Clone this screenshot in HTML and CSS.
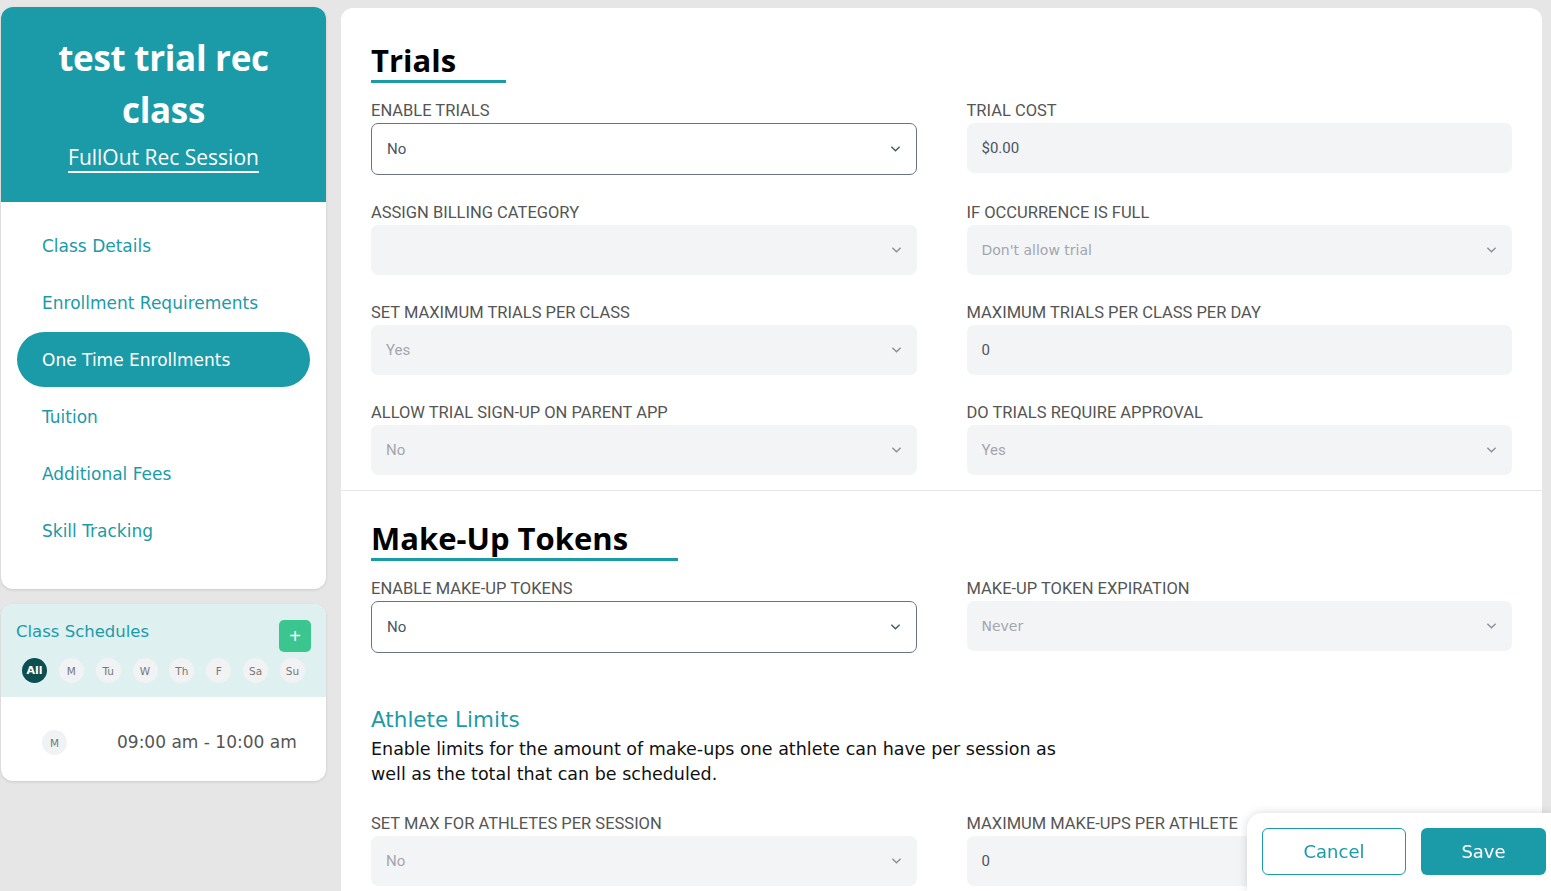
FILE: index.html
```html
<!DOCTYPE html>
<html>

<head>
    <title>test trial rec class</title>
    <link rel="stylesheet" href="styles.css">
</head>

<body>

    <div class="page">
        <aside class="sidebar">
            <div class="class-card">
                <div class="class-header">
                    <h1>test trial rec class</h1>
                    <a href="#" class="session-link">FullOut Rec Session</a>
                </div>
                <nav class="class-nav">
                    <a href="#" class="nav-item">Class Details</a>
                    <a href="#" class="nav-item">Enrollment Requirements</a>
                    <a href="#" class="nav-item active">One Time Enrollments</a>
                    <a href="#" class="nav-item">Tuition</a>
                    <a href="#" class="nav-item">Additional Fees</a>
                    <a href="#" class="nav-item">Skill Tracking</a>
                </nav>
            </div>

            <div class="schedule-card">
                <div class="schedule-header">
                    <div class="schedule-top">
                        <span class="schedule-title">Class Schedules</span>
                        <button class="add-btn">+</button>
                    </div>
                    <div class="day-chips">
                        <span class="chip chip-all">All</span>
                        <span class="chip">M</span>
                        <span class="chip">Tu</span>
                        <span class="chip">W</span>
                        <span class="chip">Th</span>
                        <span class="chip">F</span>
                        <span class="chip">Sa</span>
                        <span class="chip">Su</span>
                    </div>
                </div>
                <div class="schedule-row">
                    <span class="chip">M</span>
                    <span class="schedule-time">09:00 am - 10:00 am</span>
                </div>
            </div>
        </aside>

        <main class="main-card">
            <section class="settings-section trials">
                <h2 class="section-title">Trials</h2>
                <div class="field-grid">
                    <div class="field">
                        <label>Enable Trials</label>
                        <div class="select">
                            <span>No</span>
                            <svg class="chevron" viewBox="0 0 12 8"><path d="M1.5 1.5 6 6l4.5-4.5" /></svg>
                        </div>
                    </div>
                    <div class="field">
                        <label>Trial Cost</label>
                        <div class="input readonly">$0.00</div>
                    </div>
                    <div class="field">
                        <label>Assign Billing Category</label>
                        <div class="select disabled">
                            <span></span>
                            <svg class="chevron" viewBox="0 0 12 8"><path d="M1.5 1.5 6 6l4.5-4.5" /></svg>
                        </div>
                    </div>
                    <div class="field">
                        <label>If Occurrence Is Full</label>
                        <div class="select disabled">
                            <span class="option-text">Don't allow trial</span>
                            <svg class="chevron" viewBox="0 0 12 8"><path d="M1.5 1.5 6 6l4.5-4.5" /></svg>
                        </div>
                    </div>
                    <div class="field">
                        <label>Set Maximum Trials Per Class</label>
                        <div class="select disabled">
                            <span>Yes</span>
                            <svg class="chevron" viewBox="0 0 12 8"><path d="M1.5 1.5 6 6l4.5-4.5" /></svg>
                        </div>
                    </div>
                    <div class="field">
                        <label>Maximum Trials Per Class Per Day</label>
                        <div class="input readonly">0</div>
                    </div>
                    <div class="field">
                        <label>Allow Trial Sign-Up On Parent App</label>
                        <div class="select disabled">
                            <span>No</span>
                            <svg class="chevron" viewBox="0 0 12 8"><path d="M1.5 1.5 6 6l4.5-4.5" /></svg>
                        </div>
                    </div>
                    <div class="field">
                        <label>Do Trials Require Approval</label>
                        <div class="select disabled">
                            <span>Yes</span>
                            <svg class="chevron" viewBox="0 0 12 8"><path d="M1.5 1.5 6 6l4.5-4.5" /></svg>
                        </div>
                    </div>
                </div>
            </section>

            <section class="settings-section tokens">
                <h2 class="section-title">Make-Up Tokens</h2>
                <div class="field-grid">
                    <div class="field">
                        <label>Enable Make-Up Tokens</label>
                        <div class="select">
                            <span>No</span>
                            <svg class="chevron" viewBox="0 0 12 8"><path d="M1.5 1.5 6 6l4.5-4.5" /></svg>
                        </div>
                    </div>
                    <div class="field">
                        <label>Make-Up Token Expiration</label>
                        <div class="select disabled">
                            <span class="option-text">Never</span>
                            <svg class="chevron" viewBox="0 0 12 8"><path d="M1.5 1.5 6 6l4.5-4.5" /></svg>
                        </div>
                    </div>
                </div>

                <h3 class="sub-title">Athlete Limits</h3>
                <p class="sub-text">Enable limits for the amount of make-ups one athlete can have per session as well as the total that can be scheduled.</p>

                <div class="field-grid">
                    <div class="field">
                        <label>Set Max For Athletes Per Session</label>
                        <div class="select disabled">
                            <span>No</span>
                            <svg class="chevron" viewBox="0 0 12 8"><path d="M1.5 1.5 6 6l4.5-4.5" /></svg>
                        </div>
                    </div>
                    <div class="field">
                        <label>Maximum Make-Ups Per Athlete</label>
                        <div class="input readonly">0</div>
                    </div>
                </div>
            </section>
        </main>
    </div>

    <div class="save-bar">
        <button class="btn btn-cancel">Cancel</button>
        <button class="btn btn-save">Save</button>
    </div>

</body>
</html>
```

FILE: styles.css
```css
body {
    margin: 0;
    background-color: #e6e6e6;
    font-family: "DejaVu Sans", "Open Sans", sans-serif;
    overflow: hidden;
}

.page {
    display: flex;
    align-items: flex-start;
    padding: 7px 9px 0 1px;
}

/* sidebar */

.sidebar {
    width: 325px;
    flex-shrink: 0;
}

.class-card {
    background-color: #fff;
    border-radius: 12px;
    overflow: hidden;
    box-shadow: 0 1px 3px rgba(0, 0, 0, 0.12);
}

.class-header {
    background-color: #1b9aa8;
    color: #fff;
    text-align: center;
    padding: 25px 20px 30px;
    font-family: "Open Sans", sans-serif;
}

.class-header h1 {
    margin: 0 0 6px;
    font-size: 35px;
    line-height: 52px;
    font-weight: 700;
    letter-spacing: -0.3px;
}

.session-link {
    color: #fff;
    font-size: 21px;
    line-height: 30px;
    text-decoration: underline;
    text-decoration-thickness: 2px;
    text-underline-offset: 6px;
}

.class-nav {
    display: flex;
    flex-direction: column;
    padding: 15px 16px 30px;
}

.nav-item {
    display: flex;
    align-items: center;
    height: 55px;
    margin: 1px 0;
    padding-left: 25px;
    border-radius: 28px;
    color: #1b9aa8;
    font-size: 17px;
    text-decoration: none;
}

.nav-item.active {
    background-color: #1b9aa8;
    color: #fff;
}

.schedule-card {
    margin-top: 15px;
    background-color: #fff;
    border-radius: 12px;
    overflow: hidden;
    box-shadow: 0 1px 3px rgba(0, 0, 0, 0.12);
}

.schedule-header {
    background-color: #dff0f0;
    padding: 16px 15px 14px;
}

.schedule-top {
    display: flex;
    justify-content: space-between;
    align-items: flex-start;
}

.schedule-title {
    color: #1b9aa8;
    font-size: 16.5px;
    line-height: 24px;
}

.add-btn {
    width: 32px;
    height: 32px;
    border: none;
    border-radius: 5px;
    background-color: #3cc68f;
    color: #fff;
    font-size: 20px;
    line-height: 1;
    padding: 0;
    cursor: pointer;
}

.day-chips {
    display: flex;
    justify-content: space-between;
    margin: 6px 6px 0;
}

.chip {
    width: 25px;
    height: 25px;
    border-radius: 50%;
    background-color: #f1f2f4;
    color: #777;
    font-size: 10.5px;
    display: flex;
    align-items: center;
    justify-content: center;
    flex-shrink: 0;
}

.chip-all {
    background-color: #0d4f50;
    color: #fff;
    font-weight: 700;
    font-size: 11px;
}

.schedule-row {
    display: flex;
    align-items: center;
    gap: 50px;
    padding: 33px 0 26px 41px;
}

.schedule-time {
    color: #555;
    font-size: 17px;
    line-height: 25px;
}

/* main */

.main-card {
    flex: 1;
    margin: 1px 0 0 15px;
    background-color: #fff;
    border-radius: 12px 12px 0 0;
    min-height: 900px;
}

.settings-section {
    padding: 32px 30px 15px;
}

.trials {
    border-bottom: 1px solid #e6e6e6;
}

.tokens {
    padding-top: 27px;
}

.section-title {
    display: inline-block;
    margin: 0 0 18px;
    padding-right: 50px;
    font-family: "Open Sans", sans-serif;
    font-size: 31px;
    line-height: 40px;
    font-weight: 700;
    color: #000;
    border-bottom: 3px solid #1b9aa8;
}

.field-grid {
    display: grid;
    grid-template-columns: 1fr 1fr;
    column-gap: 50px;
    row-gap: 28px;
    align-items: start;
}

.field label {
    display: block;
    margin-bottom: 2px;
    font-family: Roboto, "Liberation Sans", sans-serif;
    font-size: 16.5px;
    line-height: 20px;
    text-transform: uppercase;
    color: #555;
}

.select,
.input {
    display: flex;
    align-items: center;
    justify-content: space-between;
    height: 50px;
    box-sizing: border-box;
    padding: 0 15px 0 15px;
    border-radius: 7px;
    font-family: Roboto, "Liberation Sans", sans-serif;
    font-size: 15px;
    color: #4b5563;
}

.select {
    height: 52px;
    border: 1px solid #6b7280;
}

.select.disabled {
    height: 50px;
    border: none;
    background-color: #f3f4f6;
    color: #a3a6ad;
}

.input.readonly {
    background-color: #f3f4f6;
}

.option-text {
    font-family: "DejaVu Sans", sans-serif;
    font-size: 14px;
}

.chevron {
    width: 11px;
    height: 8px;
    fill: none;
    stroke: #4b5563;
    stroke-width: 1.5;
}

.select.disabled .chevron {
    stroke: #8b8f96;
}

.sub-title {
    margin: 51px 0 0;
    font-size: 21.5px;
    line-height: 32px;
    font-weight: 400;
    color: #1b9aa8;
}

.sub-text {
    margin: 1px 0 27px;
    max-width: 700px;
    font-size: 17.5px;
    line-height: 25px;
    color: #111;
}

/* floating save bar */

.save-bar {
    position: fixed;
    right: 0;
    bottom: 0;
    display: flex;
    gap: 15px;
    padding: 15px 5px 16px 15px;
    background-color: #fff;
    border-radius: 15px 0 0 0;
    box-shadow: 0 0 10px rgba(0, 0, 0, 0.15);
}

.btn {
    height: 47px;
    border-radius: 6px;
    font-family: "DejaVu Sans", sans-serif;
    font-size: 18px;
    cursor: pointer;
}

.btn-cancel {
    width: 144px;
    background-color: #fff;
    border: 1px solid #1b9aa8;
    color: #1b9aa8;
}

.btn-save {
    width: 125px;
    background-color: #1b9aa8;
    border: none;
    color: #fff;
}
```
